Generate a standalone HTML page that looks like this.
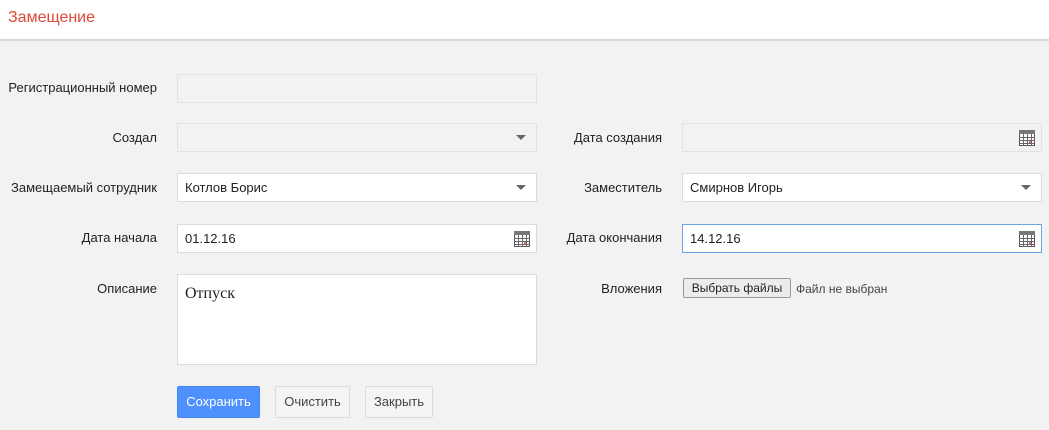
<!DOCTYPE html>
<html><head><meta charset="utf-8"><style>
*{box-sizing:border-box;margin:0;padding:0}
body{width:1049px;height:430px;background:#f2f2f2;font-family:"Liberation Sans",Arial,sans-serif;font-size:13px;color:#222;position:relative;overflow:hidden}
.hdr{position:absolute;left:0;top:0;width:1049px;height:41px;background:#fff;border-bottom:2px solid #d6d6d6}
.hdr span{position:absolute;left:8px;top:9px;font-size:16px;color:#e0483a}
.lbl{position:absolute;text-align:right;line-height:16px}
.inp{position:absolute;height:29px;border:1px solid #dcdcdc;background:#fff;padding-left:7px;line-height:27px;font-size:13px}
.dis{background:#f2f2f2;border-color:#e2e2e2}
.arr{position:absolute;right:10px;top:11px;width:0;height:0;border-left:5px solid transparent;border-right:5px solid transparent;border-top:5px solid #666}
.cal{position:absolute;right:6px;top:6px}
.btn{position:absolute;top:386px;height:32px;border:1px solid #dcdcdc;background:#f4f4f4;color:#444;line-height:30px;text-align:center;font-size:13px;border-radius:2px}
</style></head><body>
<div class="hdr"><span>Замещение</span></div>

<div class="lbl" style="left:0;width:157px;top:80px">Регистрационный номер</div>
<div class="inp dis" style="left:177px;top:74px;width:360px"></div>

<div class="lbl" style="left:0;width:157px;top:130px">Создал</div>
<div class="inp dis" style="left:177px;top:123px;width:360px"><div class="arr"></div></div>
<div class="lbl" style="left:500px;width:162px;top:130px">Дата создания</div>
<div class="inp dis" style="left:682px;top:123px;width:360px"><svg class="cal" width="16" height="16" viewBox="0 0 16 16"><rect x="0.5" y="0.5" width="15" height="15" fill="#fff" stroke="#555"/><rect x="0" y="0" width="16" height="4" fill="#777"/><path d="M0 7.5H16M0 10.5H16M0 13.5H16M4.5 4V16M8.5 4V16M12.5 4V16" stroke="#666" stroke-width="1"/><rect x="10" y="11" width="2" height="2" fill="#e07050"/></svg></div>

<div class="lbl" style="left:0;width:157px;top:180px">Замещаемый сотрудник</div>
<div class="inp" style="left:177px;top:173px;width:360px">Котлов Борис<div class="arr"></div></div>
<div class="lbl" style="left:500px;width:162px;top:180px">Заместитель</div>
<div class="inp" style="left:682px;top:173px;width:360px">Смирнов Игорь<div class="arr"></div></div>

<div class="lbl" style="left:0;width:157px;top:230px">Дата начала</div>
<div class="inp" style="left:177px;top:224px;width:360px">01.12.16<svg class="cal" width="16" height="16" viewBox="0 0 16 16"><rect x="0.5" y="0.5" width="15" height="15" fill="#fff" stroke="#555"/><rect x="0" y="0" width="16" height="4" fill="#777"/><path d="M0 7.5H16M0 10.5H16M0 13.5H16M4.5 4V16M8.5 4V16M12.5 4V16" stroke="#666"/><rect x="10" y="11" width="2" height="2" fill="#e07050"/></svg></div>
<div class="lbl" style="left:500px;width:162px;top:230px">Дата окончания</div>
<div class="inp" style="left:682px;top:224px;width:360px;border-color:#6fa3e8">14.12.16<svg class="cal" width="16" height="16" viewBox="0 0 16 16"><rect x="0.5" y="0.5" width="15" height="15" fill="#fff" stroke="#555"/><rect x="0" y="0" width="16" height="4" fill="#777"/><path d="M0 7.5H16M0 10.5H16M0 13.5H16M4.5 4V16M8.5 4V16M12.5 4V16" stroke="#666"/><rect x="10" y="11" width="2" height="2" fill="#e07050"/></svg></div>

<div class="lbl" style="left:0;width:157px;top:281px">Описание</div>
<div class="inp" style="left:177px;top:274px;width:360px;height:91px;font-family:'Liberation Serif',serif;font-size:16px;line-height:20px;padding-top:9px">Отпуск</div>
<div class="lbl" style="left:500px;width:162px;top:281px">Вложения</div>
<div style="position:absolute;left:683px;top:278px;width:108px;height:20px;border:1px solid #999;background:#ececec;border-radius:2px;text-align:center;line-height:18px;font-size:12px">Выбрать файлы</div>
<div style="position:absolute;left:796px;top:281px;color:#444;line-height:16px;font-size:12px">Файл не выбран</div>

<div class="btn" style="left:177px;width:83px;background:#4d90fe;border-color:#4285f4;color:#fff">Сохранить</div>
<div class="btn" style="left:275px;width:75px">Очистить</div>
<div class="btn" style="left:365px;width:68px">Закрыть</div>
</body></html>
